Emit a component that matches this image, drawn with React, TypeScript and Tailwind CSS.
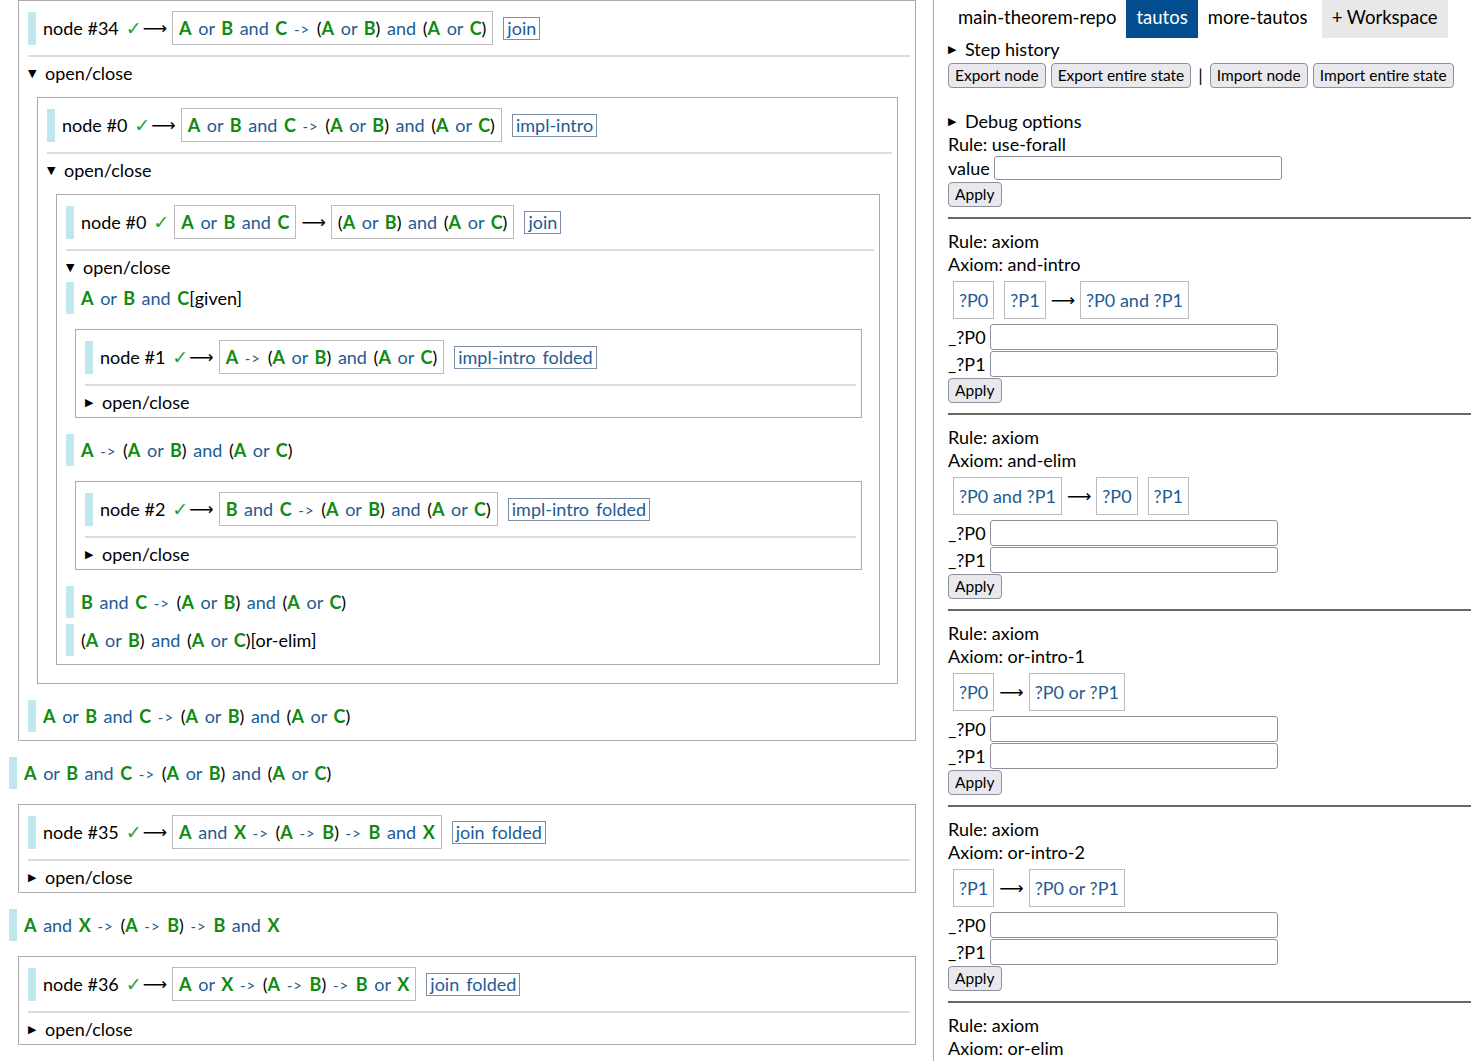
import React from "react";

type Step = { kind: "step"; text: string; tag?: string };
type NodeT = {
  kind: "node";
  id: number;
  hyps: string[];
  goal: string;
  rule: string[];
  open: boolean;
  children?: Item[];
};
type Item = Step | NodeT;

const BLUE = "text-[#1d5b94]";
const GREEN = "text-[#118a11]";

function Formula({ text }: { text: string }) {
  const parts = text.match(/\?P\d|->|[A-Z]|[()]|[a-z]+|\s+/g) || [];
  return (
    <span className="[word-spacing:2px] whitespace-nowrap">
      {parts.map((p, i) => {
        if (p.startsWith("?")) return <span key={i} className={BLUE}>{p}</span>;
        if (p === "->")
          return (
            <span key={i} className={`${BLUE} text-[15px] leading-none tracking-[1px]`}>
              {"->"}
            </span>
          );
        if (/^[A-Z]$/.test(p))
          return (
            <span key={i} className={`${GREEN} font-bold`}>
              {p}
            </span>
          );
        if (p === "(" || p === ")") return <span key={i}>{p}</span>;
        if (/^\s+$/.test(p)) return <span key={i}> </span>;
        return (
          <span key={i} className={BLUE}>
            {p}
          </span>
        );
      })}
    </span>
  );
}

const tree: Item[] = [
  {
    kind: "node",
    id: 34,
    hyps: [],
    goal: "A or B and C -> (A or B) and (A or C)",
    rule: ["join"],
    open: true,
    children: [
      {
        kind: "node",
        id: 0,
        hyps: [],
        goal: "A or B and C -> (A or B) and (A or C)",
        rule: ["impl-intro"],
        open: true,
        children: [
          {
            kind: "node",
            id: 0,
            hyps: ["A or B and C"],
            goal: "(A or B) and (A or C)",
            rule: ["join"],
            open: true,
            children: [
              { kind: "step", text: "A or B and C", tag: "given" },
              {
                kind: "node",
                id: 1,
                hyps: [],
                goal: "A -> (A or B) and (A or C)",
                rule: ["impl-intro", "folded"],
                open: false,
              },
              { kind: "step", text: "A -> (A or B) and (A or C)" },
              {
                kind: "node",
                id: 2,
                hyps: [],
                goal: "B and C -> (A or B) and (A or C)",
                rule: ["impl-intro", "folded"],
                open: false,
              },
              { kind: "step", text: "B and C -> (A or B) and (A or C)" },
              { kind: "step", text: "(A or B) and (A or C)", tag: "or-elim" },
            ],
          },
        ],
      },
      { kind: "step", text: "A or B and C -> (A or B) and (A or C)" },
    ],
  },
  { kind: "step", text: "A or B and C -> (A or B) and (A or C)" },
  {
    kind: "node",
    id: 35,
    hyps: [],
    goal: "A and X -> (A -> B) -> B and X",
    rule: ["join", "folded"],
    open: false,
  },
  { kind: "step", text: "A and X -> (A -> B) -> B and X" },
  {
    kind: "node",
    id: 36,
    hyps: [],
    goal: "A or X -> (A -> B) -> B or X",
    rule: ["join", "folded"],
    open: false,
  },
];

function StepLine({ s }: { s: Step }) {
  return (
    <div className="my-[3px] h-[32px] flex items-center border-l-[8px] border-[#c0e6ee] pl-[7px]">
      <Formula text={s.text} />
      {s.tag && <span>[{s.tag}]</span>}
    </div>
  );
}

function FBox({ text }: { text: string }) {
  return (
    <span className="mx-[5px] h-[34px] flex items-center border border-[#bbb] px-[6px]">
      <Formula text={text} />
    </span>
  );
}

function Glyph({ c, cls }: { c: string; cls?: string }) {
  return <span className={`font-['DejaVu_Sans',sans-serif] leading-none ${cls || ""}`}>{c}</span>;
}

function Summary({ open, label, h }: { open: boolean; label: string; h?: string }) {
  return (
    <div className={`${h || "h-[23px]"} flex items-center`}>
      <Glyph c={open ? "▼" : "▶"} cls="text-[11px] w-[17px]" />
      <span>{label}</span>
    </div>
  );
}

function NodeBox({ n, first }: { n: NodeT; first?: boolean }) {
  return (
    <div
      className={`ml-[9px] mr-[12px] ${first ? "mt-0" : "mt-[12px]"} mb-[13px] border border-[#aaa] pt-[10px] pl-[9px] pr-[5px] ${n.open ? "pb-[5px]" : "pb-[3px]"}`}
    >
      <div className="flex items-center h-[34px]">
        <div className="w-[8px] h-[33px] bg-[#c0e6ee]" />
        <span className="ml-[7px]">node #{n.id}</span>
        <Glyph c="✓" cls="ml-[7px] text-[#2aa23a] text-[19px]" />
        {n.hyps.map((h, i) => (
          <FBox key={i} text={h} />
        ))}
        <Glyph c="⟶" cls={`text-[17px] ${n.hyps.length ? "" : "ml-[1px]"}`} />
        <FBox text={n.goal} />
        <span className="ml-[5px] h-[23px] flex items-center border border-[#7d8fa8] px-[3px] text-[#1d5b94]">
          {n.rule.map((r, i) => (
            <span key={i} className={i > 0 ? "ml-[7px]" : ""}>
              {r}
            </span>
          ))}
        </span>
      </div>
      <div className="mt-[10px] h-[2px] bg-[#dcdcdc]" />
      <div className="mt-[4px]">
        <Summary open={n.open} label="open/close" h="h-[24px]" />
      </div>
      {n.open && n.children && (
        <div className="flex flex-col">
          {n.children.map((c, i) =>
            c.kind === "step" ? <StepLine key={i} s={c} /> : <NodeBox key={i} n={c} />
          )}
        </div>
      )}
    </div>
  );
}

function Btn({ label }: { label: string }) {
  return (
    <button className="h-[25px] px-[6px] border border-[#8f8f9d] bg-[#e9e9ed] rounded-[4px] text-[15.5px] leading-[23px] text-black">
      {label}
    </button>
  );
}

function Input({ h }: { h: string }) {
  return <input className={`${h} w-[288px] border border-[#8f8f9d] rounded-[3px] bg-white`} />;
}

type Axiom = { name: string; hyps: string[]; goal: string[] };

const axioms: Axiom[] = [
  { name: "and-intro", hyps: ["?P0", "?P1"], goal: ["?P0 and ?P1"] },
  { name: "and-elim", hyps: ["?P0 and ?P1"], goal: ["?P0", "?P1"] },
  { name: "or-intro-1", hyps: ["?P0"], goal: ["?P0 or ?P1"] },
  { name: "or-intro-2", hyps: ["?P1"], goal: ["?P0 or ?P1"] },
];

function ABox({ text }: { text: string }) {
  return (
    <span className="mx-[5px] h-[38px] flex items-center border border-[#bbb] px-[5px] text-[#1d5b94]">
      {text}
    </span>
  );
}

function Line({ children }: { children: React.ReactNode }) {
  return <div className="h-[23px] flex items-center">{children}</div>;
}

function AxiomSection({ a }: { a: Axiom }) {
  return (
    <div className="pt-[11px] pb-[10px] border-b-2 border-[#666]">
      <Line>Rule: axiom</Line>
      <Line>Axiom: {a.name}</Line>
      <div className="mt-[5px] flex items-center h-[38px]">
        {a.hyps.map((h, i) => (
          <ABox key={i} text={h} />
        ))}
        <Glyph c="⟶" cls="text-[17px]" />
        {a.goal.map((g, i) => (
          <ABox key={i} text={g} />
        ))}
      </div>
      <div className="mt-[5px] flex flex-col gap-[1px]">
        <div className="flex items-center gap-[4px] h-[26px]">
          <span>_?P0</span>
          <Input h="h-[26px]" />
        </div>
        <div className="flex items-center gap-[4px] h-[26px]">
          <span>_?P1</span>
          <Input h="h-[26px]" />
        </div>
      </div>
      <div className="mt-[1px] flex">
        <Btn label="Apply" />
      </div>
    </div>
  );
}

export default function App() {
  return (
    <div className="flex font-['Lato',sans-serif] text-[18px] text-black bg-white min-h-screen">
      <div className="w-[933px] shrink-0 pl-[9px] pr-[5px] flex flex-col">
        {tree.map((c, i) =>
          c.kind === "step" ? <StepLine key={i} s={c} /> : <NodeBox key={i} n={c} first={i === 0} />
        )}
      </div>
      <div className="flex-1 border-l border-[#aaa] pl-[14px] min-h-screen">
        <div className="flex h-[38px] items-center text-[18.5px]">
          <div className="px-[10px] h-full flex items-center pb-[3px]">main-theorem-repo</div>
          <div className="px-[10px] h-full flex items-center pb-[3px] bg-[#034e8f] text-white">tautos</div>
          <div className="px-[10px] h-full flex items-center pb-[3px]">more-tautos</div>
          <div className="ml-[4px] px-[10px] h-full flex items-center pb-[3px] bg-[#e8e8e8]">+ Workspace</div>
        </div>
        <div className="h-[24px]">
          <Summary open={false} label="Step history" />
        </div>
        <div className="flex items-center gap-[5px]">
          <Btn label="Export node" />
          <Btn label="Export entire state" />
          <span className="mx-[2px]">|</span>
          <Btn label="Import node" />
          <Btn label="Import entire state" />
        </div>
        <div className="mt-[21px]">
          <Summary open={false} label="Debug options" />
        </div>
        <div className="pb-[10px] border-b-2 border-[#666]">
          <Line>Rule: use-forall</Line>
          <div className="flex items-center gap-[4px] h-[24px]">
            <span>value</span>
            <Input h="h-[24px]" />
          </div>
          <div className="mt-[2px] flex">
            <Btn label="Apply" />
          </div>
        </div>
        {axioms.map((a) => (
          <AxiomSection key={a.name} a={a} />
        ))}
        <div className="pt-[11px]">
          <Line>Rule: axiom</Line>
          <Line>Axiom: or-elim</Line>
        </div>
      </div>
    </div>
  );
}
